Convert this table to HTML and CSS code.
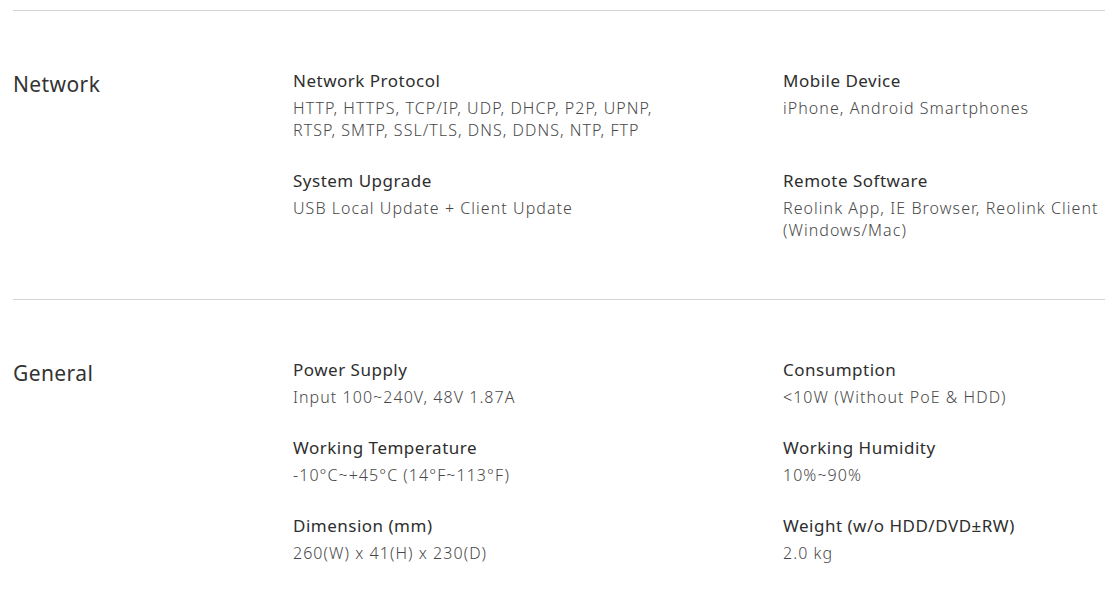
FILE: index.html
```html
<!DOCTYPE html>
<html lang="en">
<head>
<meta charset="utf-8">
<title>Specifications</title>
<link rel="stylesheet" href="styles.css">
</head>
<body>
<main class="specs">
  <section class="spec-section">
    <h2 class="spec-title">Network</h2>
    <div class="spec-grid">
      <div class="spec-item">
        <h3 class="spec-label">Network Protocol</h3>
        <p class="spec-value">HTTP, HTTPS, TCP/IP, UDP, DHCP, P2P, UPNP,<br>RTSP, SMTP, SSL/TLS, DNS, DDNS, NTP, FTP</p>
      </div>
      <div class="spec-item">
        <h3 class="spec-label">Mobile Device</h3>
        <p class="spec-value">iPhone, Android Smartphones</p>
      </div>
      <div class="spec-item">
        <h3 class="spec-label">System Upgrade</h3>
        <p class="spec-value">USB Local Update + Client Update</p>
      </div>
      <div class="spec-item">
        <h3 class="spec-label">Remote Software</h3>
        <p class="spec-value">Reolink App, IE Browser, Reolink Client<br>(Windows/Mac)</p>
      </div>
    </div>
  </section>
  <section class="spec-section">
    <h2 class="spec-title">General</h2>
    <div class="spec-grid">
      <div class="spec-item">
        <h3 class="spec-label">Power Supply</h3>
        <p class="spec-value">Input 100~240V, 48V 1.87A</p>
      </div>
      <div class="spec-item">
        <h3 class="spec-label">Consumption</h3>
        <p class="spec-value">&lt;10W (Without PoE &amp; HDD)</p>
      </div>
      <div class="spec-item">
        <h3 class="spec-label">Working Temperature</h3>
        <p class="spec-value">-10°C~+45°C (14°F~113°F)</p>
      </div>
      <div class="spec-item">
        <h3 class="spec-label">Working Humidity</h3>
        <p class="spec-value">10%~90%</p>
      </div>
      <div class="spec-item">
        <h3 class="spec-label">Dimension (mm)</h3>
        <p class="spec-value">260(W) x 41(H) x 230(D)</p>
      </div>
      <div class="spec-item">
        <h3 class="spec-label">Weight (w/o HDD/DVD±RW)</h3>
        <p class="spec-value">2.0 kg</p>
      </div>
    </div>
  </section>
</main>
</body>
</html>
```

FILE: styles.css
```css
html, body {
  margin: 0;
  padding: 0;
  background: #ffffff;
}

body {
  font-family: "Noto Sans", "Open Sans", sans-serif;
  color: #333333;
  overflow: hidden;
}

.specs {
  padding: 10px 1px 0 13px;
}

.spec-section {
  display: grid;
  grid-template-columns: 280px 1fr;
  border-top: 1px solid #d4d4d4;
  padding: 58px 0;
}

.spec-title {
  margin: 0;
  font-size: 21px;
  line-height: 30px;
  font-weight: 400;
  letter-spacing: 0.4px;
  color: #333333;
}

.spec-grid {
  display: grid;
  grid-template-columns: 490px 1fr;
  row-gap: 28px;
}

.spec-label {
  margin: 0;
  font-size: 17px;
  line-height: 24px;
  font-weight: 400;
  letter-spacing: 0.5px;
  color: #2e2e2e;
}

.spec-value {
  margin: 4px 0 0;
  font-size: 16px;
  line-height: 22px;
  font-weight: 300;
  letter-spacing: 1.05px;
  color: #484848;
  white-space: nowrap;
}
```
